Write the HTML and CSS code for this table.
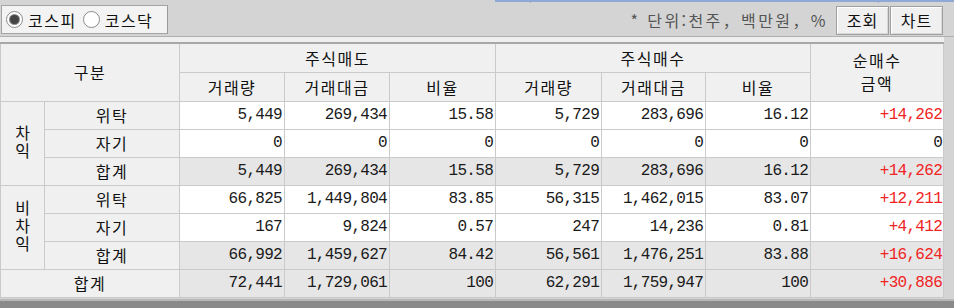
FILE: index.html
```html
<!DOCTYPE html>
<html lang="ko">
<head>
<meta charset="utf-8">
<link rel="stylesheet" href="styles.css">
</head>
<body>
<div class="screen">
  <div class="tabedge"><span class="tabline"><i class="tick t1"></i><i class="tick t2"></i></span></div>
  <div class="toolbar">
    <div class="radios">
      <label class="radio"><span class="dot on"></span><span class="rlabel">코스피</span></label>
      <label class="radio"><span class="dot"></span><span class="rlabel">코스닥</span></label>
    </div>
    <div class="tools">
      <span class="unit">* 단위:천주，백만원，%</span>
      <button class="btn">조회</button>
      <button class="btn">차트</button>
    </div>
  </div>
  <div class="gridwrap">
    <table class="grid">
      <colgroup>
        <col class="c-a"><col class="c-b"><col class="c-n"><col class="c-n"><col class="c-n2"><col class="c-n3"><col class="c-n4"><col class="c-n"><col class="c-net">
      </colgroup>
      <thead>
        <tr>
          <th colspan="2" rowspan="2">구분</th>
          <th colspan="3">주식매도</th>
          <th colspan="3">주식매수</th>
          <th rowspan="2" class="net-h">순매수<br>금액</th>
        </tr>
        <tr>
          <th>거래량</th><th>거래대금</th><th>비율</th>
          <th>거래량</th><th>거래대금</th><th>비율</th>
        </tr>
      </thead>
      <tbody>
        <tr>
          <th rowspan="3" class="vert"><span class="vtext">차익</span></th>
          <th>위탁</th>
          <td>5,449</td><td>269,434</td><td>15.58</td><td>5,729</td><td>283,696</td><td>16.12</td><td class="up">+14,262</td>
        </tr>
        <tr>
          <th>자기</th>
          <td>0</td><td>0</td><td>0</td><td>0</td><td>0</td><td>0</td><td>0</td>
        </tr>
        <tr class="sum">
          <th>합계</th>
          <td>5,449</td><td>269,434</td><td>15.58</td><td>5,729</td><td>283,696</td><td>16.12</td><td class="up">+14,262</td>
        </tr>
        <tr>
          <th rowspan="3" class="vert"><span class="vtext">비차익</span></th>
          <th>위탁</th>
          <td>66,825</td><td>1,449,804</td><td>83.85</td><td>56,315</td><td>1,462,015</td><td>83.07</td><td class="up">+12,211</td>
        </tr>
        <tr>
          <th>자기</th>
          <td>167</td><td>9,824</td><td>0.57</td><td>247</td><td>14,236</td><td>0.81</td><td class="up">+4,412</td>
        </tr>
        <tr class="sum">
          <th>합계</th>
          <td>66,992</td><td>1,459,627</td><td>84.42</td><td>56,561</td><td>1,476,251</td><td>83.88</td><td class="up">+16,624</td>
        </tr>
        <tr class="sum total">
          <th colspan="2">합계</th>
          <td>72,441</td><td>1,729,061</td><td>100</td><td>62,291</td><td>1,759,947</td><td>100</td><td class="up">+30,886</td>
        </tr>
      </tbody>
    </table>
  </div>
  <div class="bottom"></div>
</div>
</body>
</html>
```
FILE: styles.css
```css
* { box-sizing: border-box; }
html, body { margin: 0; padding: 0; }
body {
  background: #d4d4d4;
  font-family: "Noto Sans CJK KR", "DejaVu Sans", sans-serif;
  color: #1a1a1a;
  width: 954px;
  height: 308px;
  overflow: hidden;
}
.screen { display: flex; flex-direction: column; height: 308px; }

.tabedge { height: 2px; display: flex; }
.tabline {
  margin-left: 495px; flex: 1; height: 2px;
  background: #8fa8d6; position: relative;
}
.tick { position: absolute; top: 0; width: 1px; height: 3px; background: #8fa8d6; }
.tick.t1 { left: 35px; }
.tick.t2 { left: 383px; }

.toolbar {
  height: 35px;
  display: flex; align-items: flex-start; justify-content: space-between;
  padding: 3px 11px 0 1px;
  border-bottom: 1px solid #b0b0b0;
}
.radios {
  height: 29px; width: 167px;
  display: flex; align-items: center; gap: 6px;
  padding-left: 4px;
  background: #f3f3f3;
  border: 1px solid #a4a4a4;
  border-right-color: #9a9a9a;
}
.radio { display: flex; align-items: center; gap: 5px; }
.dot {
  width: 17px; height: 17px; border-radius: 50%;
  border: 1px solid #8a8a8a; background: #fff;
  display: flex; align-items: center; justify-content: center;
}
.dot.on::after {
  content: ""; width: 9px; height: 9px; border-radius: 50%;
  background: #444; box-shadow: 0 0 0 1px #888;
}
.rlabel { font-size: 16px; letter-spacing: 1.5px; line-height: 1; color: #111; }

.tools { display: flex; align-items: center; height: 30px; }
.unit {
  font-size: 16px; color: #555; letter-spacing: 2.4px;
  margin-right: 7px; white-space: nowrap;
}
.btn {
  font-family: inherit; font-size: 16px; color: #111;
  height: 29px; width: 53px; padding: 0;
  background: #f0f0f0;
  border: 1px solid #a0a0a0;
  box-shadow: inset 1px 1px 0 #fff, inset -1px -1px 0 #d8d8d8;
  margin-left: 1px; letter-spacing: 1px;
}

.gridwrap {
  width: 944px;
  background: #efefef;
  padding-top: 5px;
}
.grid {
  border-collapse: collapse;
  table-layout: fixed;
  width: 944px;
  border: 1px solid #a8a8a8;
  border-top: 2px solid #a8a8a8;
}
.c-a { width: 44px; }
.c-b { width: 135px; }
.c-n { width: 105px; }
.c-n2 { width: 106px; }
.c-n3 { width: 106px; }
.c-n4 { width: 104px; }
.c-net { width: 133px; }

.grid th, .grid td {
  border: 1px solid #cacaca;
  height: 28px; padding: 0;
  white-space: nowrap; overflow: hidden;
}
.grid th {
  background: #f0f0f0;
  font-weight: normal;
  font-size: 16px; letter-spacing: 1.5px;
  text-align: center; color: #111;
  line-height: 1;
}
.grid thead th { height: 29px; }
.grid th.net-h { line-height: 23px; }
.vtext {
  display: inline-block;
  writing-mode: vertical-rl;
  text-orientation: upright;
  letter-spacing: 2px;
  line-height: 1;
}
.grid td {
  background: #fff;
  text-align: right;
  font-family: "Liberation Mono", monospace;
  font-size: 16px; letter-spacing: -0.7px;
  padding-right: 2px;
  color: #1a1a1a;
}
.grid td:last-child { padding-right: 1px; }
.grid tr.sum td { background: #e6e6e6; }
.grid td.up { color: #f02424; }

.bottom {
  flex: 1;
  border-top: 2px solid #b8b8b8;
  background: #8a8a8a;
  margin-top: 1px;
}
```
